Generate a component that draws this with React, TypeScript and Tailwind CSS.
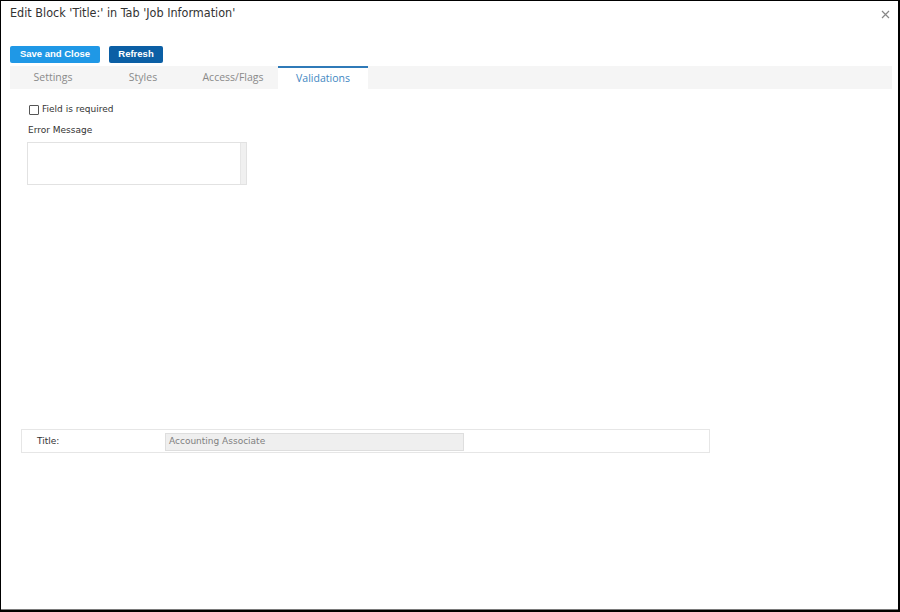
import React from "react";

export default function App() {
  const tabs = ["Settings", "Styles", "Access/Flags", "Validations"];
  return (
    <div className="w-[900px] h-[612px] bg-black p-[1px] pr-[2px] pb-[2px]">
      <div className="w-full h-full bg-white flex flex-col border-b border-[#7a7a7a] relative" style={{ fontFamily: '"DejaVu Sans", Verdana, sans-serif' }}>
        <div className="flex items-center justify-between pl-[9px] pr-[8px] pt-[1px] h-[24px]">
          <div className="text-[12.5px] text-[#333]" style={{ fontFamily: '"DejaVu Sans Condensed", "DejaVu Sans", sans-serif' }}>Edit Block 'Title:' in Tab 'Job Information'</div>
          <svg width="9" height="9" viewBox="0 0 9 9" className="mt-[2px]">
            <path d="M1 1 L8 8 M8 1 L1 8" stroke="#888" strokeWidth="1.2" />
          </svg>
        </div>
        <div className="flex gap-[9px] pl-[9px] mt-[21px]">
          <button className="h-[17px] w-[90px] rounded-[2px] bg-[#1f98e6] text-white text-[9.5px] font-bold" style={{ fontFamily: '"Liberation Sans", Arial, sans-serif' }}>Save and Close</button>
          <button className="h-[17px] w-[54px] rounded-[2px] bg-[#0b5fa5] text-white text-[9.5px] font-bold" style={{ fontFamily: '"Liberation Sans", Arial, sans-serif' }}>Refresh</button>
        </div>
        <div className="mt-[3px] ml-[9px] mr-[6px] h-[23px] bg-[#f5f5f5] flex" style={{ fontFamily: '"Open Sans", sans-serif' }}>
          <div className="-ml-[2px] flex h-full">
            {tabs.map((t, i) =>
              i === 3 ? (
                <div key={t} className="w-[90px] h-full bg-white border-t-2 border-[#2f7ab8] flex items-center justify-center text-[10.5px] text-[#3f87c2]">{t}</div>
              ) : (
                <div key={t} className="w-[90px] h-full flex items-center justify-center text-[10.5px] text-[#8a8a8a]">{t}</div>
              )
            )}
          </div>
        </div>
        <div className="pl-[28px] mt-[14px] flex items-center gap-[3px]">
          <div className="w-[10px] h-[10px] border border-[#555] rounded-[1px]" />
          <span className="text-[9px] text-[#333]">Field is required</span>
        </div>
        <div className="pl-[27px] mt-[7px] text-[9px] text-[#333]">Error Message</div>
        <div className="ml-[26px] mt-[5px] w-[220px] h-[43px] border border-[#e2e2e2] flex justify-end">
          <div className="w-[6px] h-full bg-[#f0f0f0] border-l border-[#e6e6e6]" />
        </div>
        <div className="ml-[20px] mt-[244px] w-[689px] h-[24px] border border-[#e6e6e6] flex items-start pt-[3px]">
          <div className="w-[143px] pl-[15px] h-[18px] flex items-center text-[9px] text-[#333]">Title:</div>
          <div className="w-[299px] h-[18px] bg-[#efefef] border border-[#dedede] flex items-center pl-[3px] text-[9px] text-[#808080]">Accounting Associate</div>
        </div>
      </div>
    </div>
  );
}
